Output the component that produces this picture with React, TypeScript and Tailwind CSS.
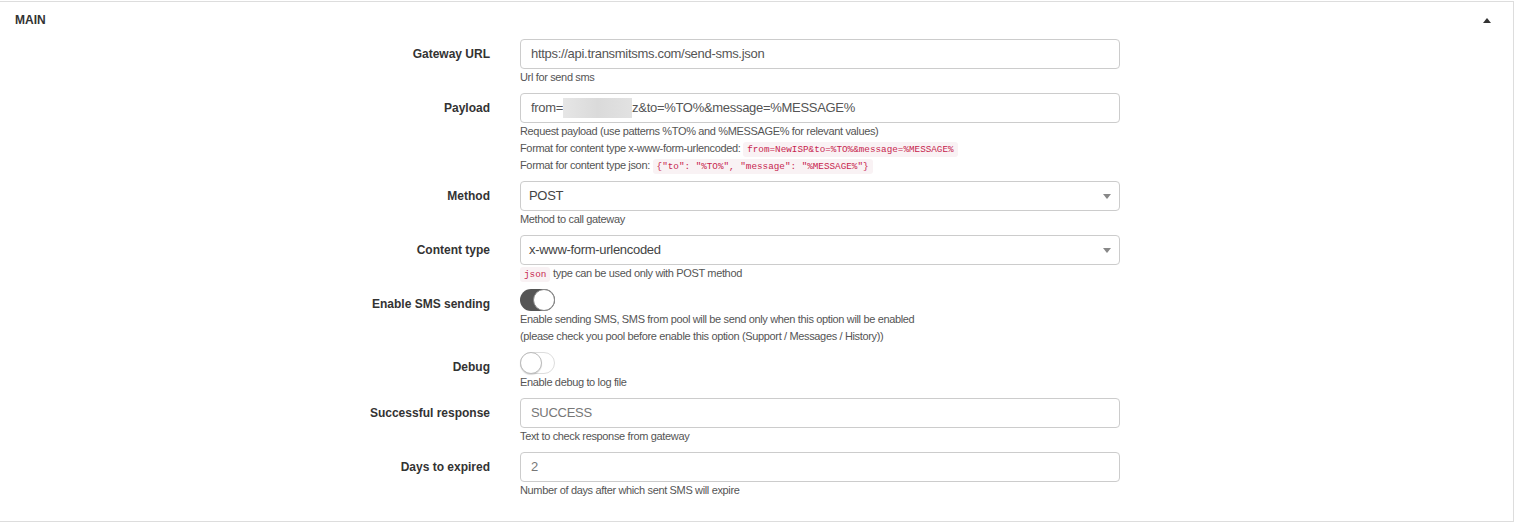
import React from 'react';

const font = { fontFamily: '"Liberation Sans", Arial, sans-serif' };

const Code: React.FC<{ children: React.ReactNode }> = ({ children }) => (
	<code className="font-['Liberation_Mono',monospace] text-[9.3px] leading-[12px] tracking-normal text-[#c7254e] bg-[#f9f2f4] rounded-[3px] px-[4px] py-[2px]">
		{children}
	</code>
);

const Row: React.FC<{ label: string; children: React.ReactNode }> = ({ label, children }) => (
	<div className="flex mb-[7px]">
		<div className="w-[490px] shrink-0 text-right text-[12px] font-bold leading-[17px] pt-[7px] text-[#333]">{label}</div>
		<div className="ml-[30px] w-[600px]">{children}</div>
	</div>
);

const Help: React.FC<{ children: React.ReactNode }> = ({ children }) => (
	<div className="text-[11px] leading-[17px] tracking-[-0.35px] text-[#555]">{children}</div>
);

const TextInput: React.FC<{ children: React.ReactNode; muted?: boolean }> = ({ children, muted }) => (
	<div
		className={`h-[30px] border border-[#ccc] rounded-[4px] px-[10px] flex items-center text-[13px] tracking-[-0.3px] ${
			muted ? 'text-[#777]' : 'text-[#555]'
		}`}
	>
		{children}
	</div>
);

const Select: React.FC<{ value: string }> = ({ value }) => (
	<div className="h-[30px] border border-[#ccc] rounded-[4px] pl-[8px] pr-[8px] flex items-center justify-between text-[13px] tracking-[-0.3px] text-[#444]">
		<span>{value}</span>
		<span className="w-0 h-0 border-l-[4px] border-r-[4px] border-t-[5px] border-l-transparent border-r-transparent border-t-[#888]" />
	</div>
);

const Toggle: React.FC<{ on: boolean }> = ({ on }) =>
	on ? (
		<div className="w-[35px] h-[22px] rounded-full bg-[#555] relative">
			<div className="absolute right-0 top-0 w-[22px] h-[22px] rounded-full bg-white border border-[#888]" />
		</div>
	) : (
		<div className="w-[35px] h-[22px] rounded-full bg-white border border-[#ddd] relative">
			<div className="absolute left-[-1px] top-[-1px] w-[22px] h-[22px] rounded-full bg-white border border-[#bbb] shadow-[0_1px_1px_rgba(0,0,0,0.15)]" />
		</div>
	);

export default function App() {
	return (
		<div style={font} className="bg-white w-[1515px] h-[522px] pt-[1px]">
			<div className="w-[1514px] h-[521px] border-t border-r border-b border-[#ddd] bg-white">
				<div className="flex items-center justify-between pl-[15px] pr-[22px] h-[36px]">
					<span className="text-[12px] font-bold text-[#333] uppercase">Main</span>
					<span className="w-0 h-0 border-l-[4px] border-r-[4px] border-b-[5px] border-l-transparent border-r-transparent border-b-[#333]" />
				</div>
				<div className="pt-[1px]">
					<Row label="Gateway URL">
						<TextInput>https://api.transmitsms.com/send-sms.json</TextInput>
						<Help>Url for send sms</Help>
					</Row>
					<Row label="Payload">
						<TextInput>
							from=
							<span className="inline-block w-[69px] h-[20px] bg-gradient-to-r from-[#e6e6e6] via-[#dadada] to-[#e2e2e2]" />
							z&amp;to=%TO%&amp;message=%MESSAGE%
						</TextInput>
						<Help>Request payload (use patterns %TO% and %MESSAGE% for relevant values)</Help>
						<Help>
							Format for content type x-www-form-urlencoded: <Code>from=NewISP&amp;to=%TO%&amp;message=%MESSAGE%</Code>
						</Help>
						<Help>
							Format for content type json: <Code>{'{"to": "%TO%", "message": "%MESSAGE%"}'}</Code>
						</Help>
					</Row>
					<Row label="Method">
						<Select value="POST" />
						<Help>Method to call gateway</Help>
					</Row>
					<Row label="Content type">
						<Select value="x-www-form-urlencoded" />
						<Help>
							<Code>json</Code> type can be used only with POST method
						</Help>
					</Row>
					<Row label="Enable SMS sending">
						<Toggle on={true} />
						<Help>Enable sending SMS, SMS from pool will be send only when this option will be enabled</Help>
						<Help>(please check you pool before enable this option (Support / Messages / History))</Help>
					</Row>
					<Row label="Debug">
						<Toggle on={false} />
						<Help>Enable debug to log file</Help>
					</Row>
					<Row label="Successful response">
						<TextInput muted>SUCCESS</TextInput>
						<Help>Text to check response from gateway</Help>
					</Row>
					<Row label="Days to expired">
						<TextInput muted>2</TextInput>
						<Help>Number of days after which sent SMS will expire</Help>
					</Row>
				</div>
			</div>
		</div>
	);
}
